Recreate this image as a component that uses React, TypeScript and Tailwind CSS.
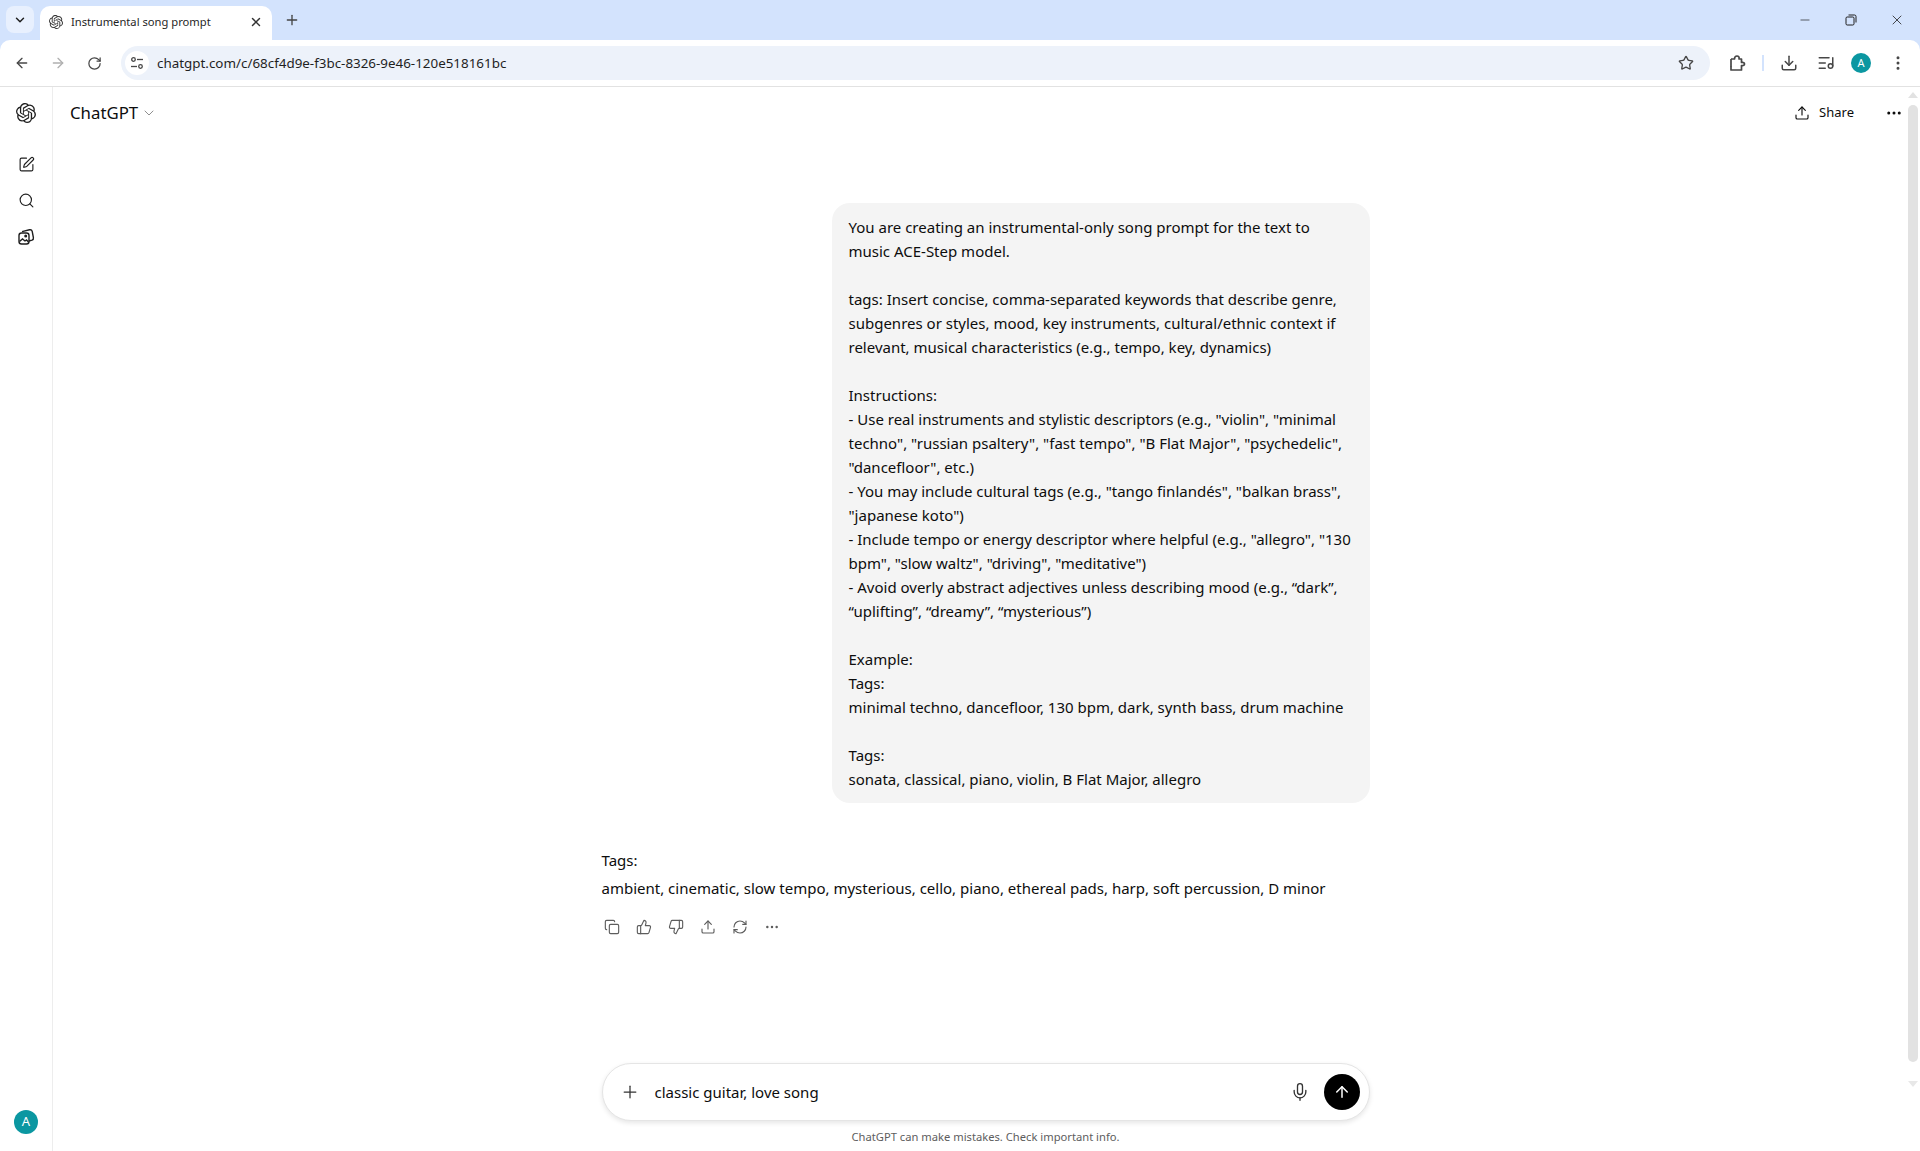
import {
  ArrowLeft,
  ArrowRight,
  ArrowUp,
  ChevronDown,
  Copy,
  Download,
  Ellipsis,
  EllipsisVertical,
  ListMusic,
  Mic,
  Minus,
  Plus,
  RefreshCw,
  RotateCw,
  Search,
  SquarePen,
  Star,
  ThumbsDown,
  ThumbsUp,
  Upload,
  X,
} from "lucide-react";
import { SiOpenai } from "react-icons/si";

const promptLines = [
  "You are creating an instrumental-only song prompt for the text to",
  "music ACE-Step model.",
  "",
  "tags: Insert concise, comma-separated keywords that describe genre,",
  "subgenres or styles, mood, key instruments, cultural/ethnic context if",
  "relevant, musical characteristics (e.g., tempo, key, dynamics)",
  "",
  "Instructions:",
  '- Use real instruments and stylistic descriptors (e.g., "violin", "minimal',
  'techno", "russian psaltery", "fast tempo", "B Flat Major", "psychedelic",',
  '"dancefloor", etc.)',
  '- You may include cultural tags (e.g., "tango finlandés", "balkan brass",',
  '"japanese koto")',
  '- Include tempo or energy descriptor where helpful (e.g., "allegro", "130',
  'bpm", "slow waltz", "driving", "meditative")',
  "- Avoid overly abstract adjectives unless describing mood (e.g., “dark”,",
  "“uplifting”, “dreamy”, “mysterious”)",
  "",
  "Example:",
  "Tags:",
  "minimal techno, dancefloor, 130 bpm, dark, synth bass, drum machine",
  "",
  "Tags:",
  "sonata, classical, piano, violin, B Flat Major, allegro",
];

const LibraryIcon = () => (
  <svg width="18" height="18" viewBox="0 0 18 18" fill="none" stroke="currentColor" strokeWidth="1.4">
    <rect x="2" y="5" width="10" height="11" rx="2.5" />
    <path d="M5 3.6 12.5 1.8c1.3-.3 2.4.4 2.7 1.6l1.2 6.2c.2 1.1-.4 2.1-1.4 2.5l-3 .9" />
    <path d="M2.5 13.5 5.5 11l2.5 2 1.5-1 2 2" />
    <circle cx="8.7" cy="8" r=".8" />
  </svg>
);

const RestoreIcon = () => (
  <svg width="12" height="12" viewBox="0 0 12 12" fill="none" stroke="currentColor" strokeWidth="1">
    <rect x="1" y="3" width="8" height="8" rx="1.2" />
    <path d="M3.5 1h6a1.5 1.5 0 0 1 1.5 1.5v6" />
  </svg>
);

const ExtensionIcon = () => (
  <svg width="18" height="18" viewBox="0 0 18 18" fill="none" stroke="currentColor" strokeWidth="1.7" strokeLinejoin="round">
    <path d="M3 5h3.500C6.500 3 7.500 2 9 2s2.500 1 2 3h2.500v3.500c2-.5 3 .5 3 1.500s-1 2-3 1.500V16H3v-3.500" />
    <path d="M3 5v8" />
  </svg>
);

const SiteInfoIcon = () => (
  <svg width="14" height="14" viewBox="0 0 14 14" fill="none" stroke="currentColor" strokeWidth="1.300">
    <circle cx="3.500" cy="3.500" r="1.800" />
    <path d="M7 3.500h6" />
    <path d="M1 10.500h6" />
    <circle cx="10.500" cy="10.500" r="1.800" />
  </svg>
);

const ChromeBar = () => (
  <div className="shrink-0">
    <div className="flex h-10 items-end bg-[#d3e3fd] pl-[6px]">
      <div className="mb-[7px] flex h-[27px] w-[28px] items-center justify-center rounded-lg bg-[#e8f0fe]">
        <ChevronDown size={14} strokeWidth={2.5} className="text-[#1f1f1f]" />
      </div>
      <div className="ml-[6px] flex h-[34px] w-[232px] items-center rounded-t-[10px] bg-white pb-[2px] pl-[9px] pr-[9px]">
        <SiOpenai size={14} className="text-[#333]" />
        <span className="ml-[8px] flex-1 truncate text-[11.2px] text-[#1f1f1f]">Instrumental song prompt</span>
        <X size={14} strokeWidth={2.5} className="text-[#333]" />
      </div>
      <div className="ml-[12px] mb-[12px] flex h-4 w-4 items-center justify-center">
        <Plus size={16} className="text-[#444]" />
      </div>
      <div className="ml-auto mb-[12px] flex items-center text-[#1f1f1f]">
        <div className="flex w-[46px] justify-center">
          <Minus size={14} strokeWidth={1.2} />
        </div>
        <div className="flex w-[46px] justify-center">
          <RestoreIcon />
        </div>
        <div className="flex w-[46px] justify-center">
          <X size={16} strokeWidth={1.2} />
        </div>
      </div>
    </div>
    <div className="bg-[#d3e3fd]">
      <div className="flex h-[47px] items-center rounded-t-[10px] border-b border-[#e2e2e2] bg-white">
        <div className="flex w-[121px] items-center pl-[14px] text-[#474747]">
          <ArrowLeft size={16} strokeWidth={2} />
          <ArrowRight size={16} strokeWidth={2} className="ml-[20px] text-[#b0b0b0]" />
          <RotateCw size={15} strokeWidth={2} className="ml-[21px]" />
        </div>
        <div className="flex h-[34px] w-[1589px] items-center rounded-full bg-[#edf2fa] pl-[4px] pr-[16px]">
          <div className="flex h-[24px] w-[24px] items-center justify-center rounded-full bg-white text-[#474747]">
            <SiteInfoIcon />
          </div>
          <span className="ml-[8px] flex-1 text-[13.4px] text-[#1f1f1f]">chatgpt.com/c/68cf4d9e-f3bc-8326-9e46-120e518161bc</span>
          <Star size={16} strokeWidth={2} className="text-[#474747]" />
        </div>
        <div className="ml-[18px] text-[#474747]">
          <ExtensionIcon />
        </div>
        <div className="ml-[16px] h-[16px] w-[2px] bg-[#d3e3fd]" />
        <Download size={18} strokeWidth={2} className="ml-[16px] text-[#474747]" />
        <ListMusic size={18} strokeWidth={2} className="ml-[19px] text-[#474747]" />
        <div className="ml-[16px] flex h-5 w-5 items-center justify-center rounded-full bg-[#0b97a1] text-[11px] text-white">A</div>
        <EllipsisVertical size={18} strokeWidth={2} className="ml-[18px] text-[#474747]" />
      </div>
    </div>
  </div>
);

const Sidebar = () => (
  <aside className="flex w-[53px] shrink-0 flex-col items-center border-r border-[#ededed] pb-[17px] pt-[16px] text-[#1f1f1f]">
    <SiOpenai size={20} />
    <SquarePen size={17} strokeWidth={1.6} className="mt-[33px]" />
    <Search size={17} strokeWidth={1.6} className="mt-[19px]" />
    <div className="mt-[19px]">
      <LibraryIcon />
    </div>
    <div className="mt-auto flex h-6 w-6 items-center justify-center rounded-full bg-[#0b97a1] text-[13px] text-white">A</div>
  </aside>
);

const Composer = () => (
  <div className="flex w-[768px] flex-col items-center">
    <div className="flex h-[58px] w-full items-center rounded-[29px] border border-[#e5e5e5] bg-white pl-[17px] pr-[9px] shadow-[0_2px_5px_rgba(0,0,0,0.1)]">
      <Plus size={20} strokeWidth={1.5} className="text-[#333]" />
      <span className="ml-[15px] flex-1 text-[15px] text-[#0d0d0d]">classic guitar, love song</span>
      <Mic size={20} strokeWidth={1.6} className="text-[#333]" />
      <div className="ml-[14px] flex h-9 w-9 items-center justify-center rounded-full bg-black">
        <ArrowUp size={18} strokeWidth={2} className="text-white" />
      </div>
    </div>
    <p className="mt-[8px] text-[11.2px] leading-[16px] text-[#5d5d5d]">ChatGPT can make mistakes. Check important info.</p>
  </div>
);

const Conversation = () => (
  <div className="flex w-[768px] flex-col">
    <div className="ml-auto w-[538px] rounded-[18px] bg-[#f4f4f4] py-[12px] pl-[17px] pr-[15px] text-[15px] leading-[24px] text-[#0d0d0d]">
      {promptLines.map((line, i) => (
        <div key={i} className="h-6 whitespace-nowrap">
          {line}
        </div>
      ))}
    </div>
    <div className="mt-[43px] text-[15px] leading-[28px] text-[#0d0d0d]">
      <p>Tags:</p>
      <p>ambient, cinematic, slow tempo, mysterious, cello, piano, ethereal pads, harp, soft percussion, D minor</p>
    </div>
    <div className="mt-[17px] flex items-center gap-[16px] pl-[2px] text-[#5d5d5d]">
      <Copy size={16} strokeWidth={1.7} />
      <ThumbsUp size={16} strokeWidth={1.7} />
      <ThumbsDown size={16} strokeWidth={1.7} />
      <Upload size={16} strokeWidth={1.7} />
      <RefreshCw size={16} strokeWidth={1.7} />
      <Ellipsis size={16} strokeWidth={1.7} />
    </div>
  </div>
);

export default function App() {
  return (
    <div className="flex h-screen flex-col overflow-hidden bg-white font-['Noto_Sans',sans-serif]">
      <ChromeBar />
      <div className="relative flex min-h-0 flex-1">
        <Sidebar />
        <main className="flex min-w-0 flex-1 flex-col">
          <header className="flex h-[52px] shrink-0 items-center pl-[17px] pr-[17px]">
            <span className="text-[16.8px] text-[#0d0d0d]">ChatGPT</span>
            <ChevronDown size={16} strokeWidth={1.5} className="ml-[3px] text-[#8f8f8f]" />
            <div className="ml-auto flex items-center text-[#0d0d0d]">
              <Upload size={16} strokeWidth={1.7} />
              <span className="ml-[9px] text-[13px]">Share</span>
              <Ellipsis size={18} strokeWidth={2} className="ml-[31px]" />
            </div>
          </header>
          <div className="flex min-h-0 flex-1 flex-col items-center pr-[2px] pt-[64px]">
            <Conversation />
          </div>
          <div className="flex shrink-0 justify-center pb-[6px] pr-[2px]">
            <Composer />
          </div>
        </main>
        {/* page scrollbar sits over the content */}
        <div className="absolute right-[2px] top-0 flex w-[10px] flex-col items-center pt-[5px]">
          <div className="h-0 w-0 border-x-[5px] border-b-[6px] border-x-transparent border-b-[#e2e2e2]" />
          <div className="mt-[7px] h-[957px] w-[10px] rounded-full bg-[#e2e2e2]" />
          <div className="mt-[19px] h-0 w-0 border-x-[5px] border-t-[6px] border-x-transparent border-t-[#e8e8e8]" />
        </div>
      </div>
    </div>
  );
}
